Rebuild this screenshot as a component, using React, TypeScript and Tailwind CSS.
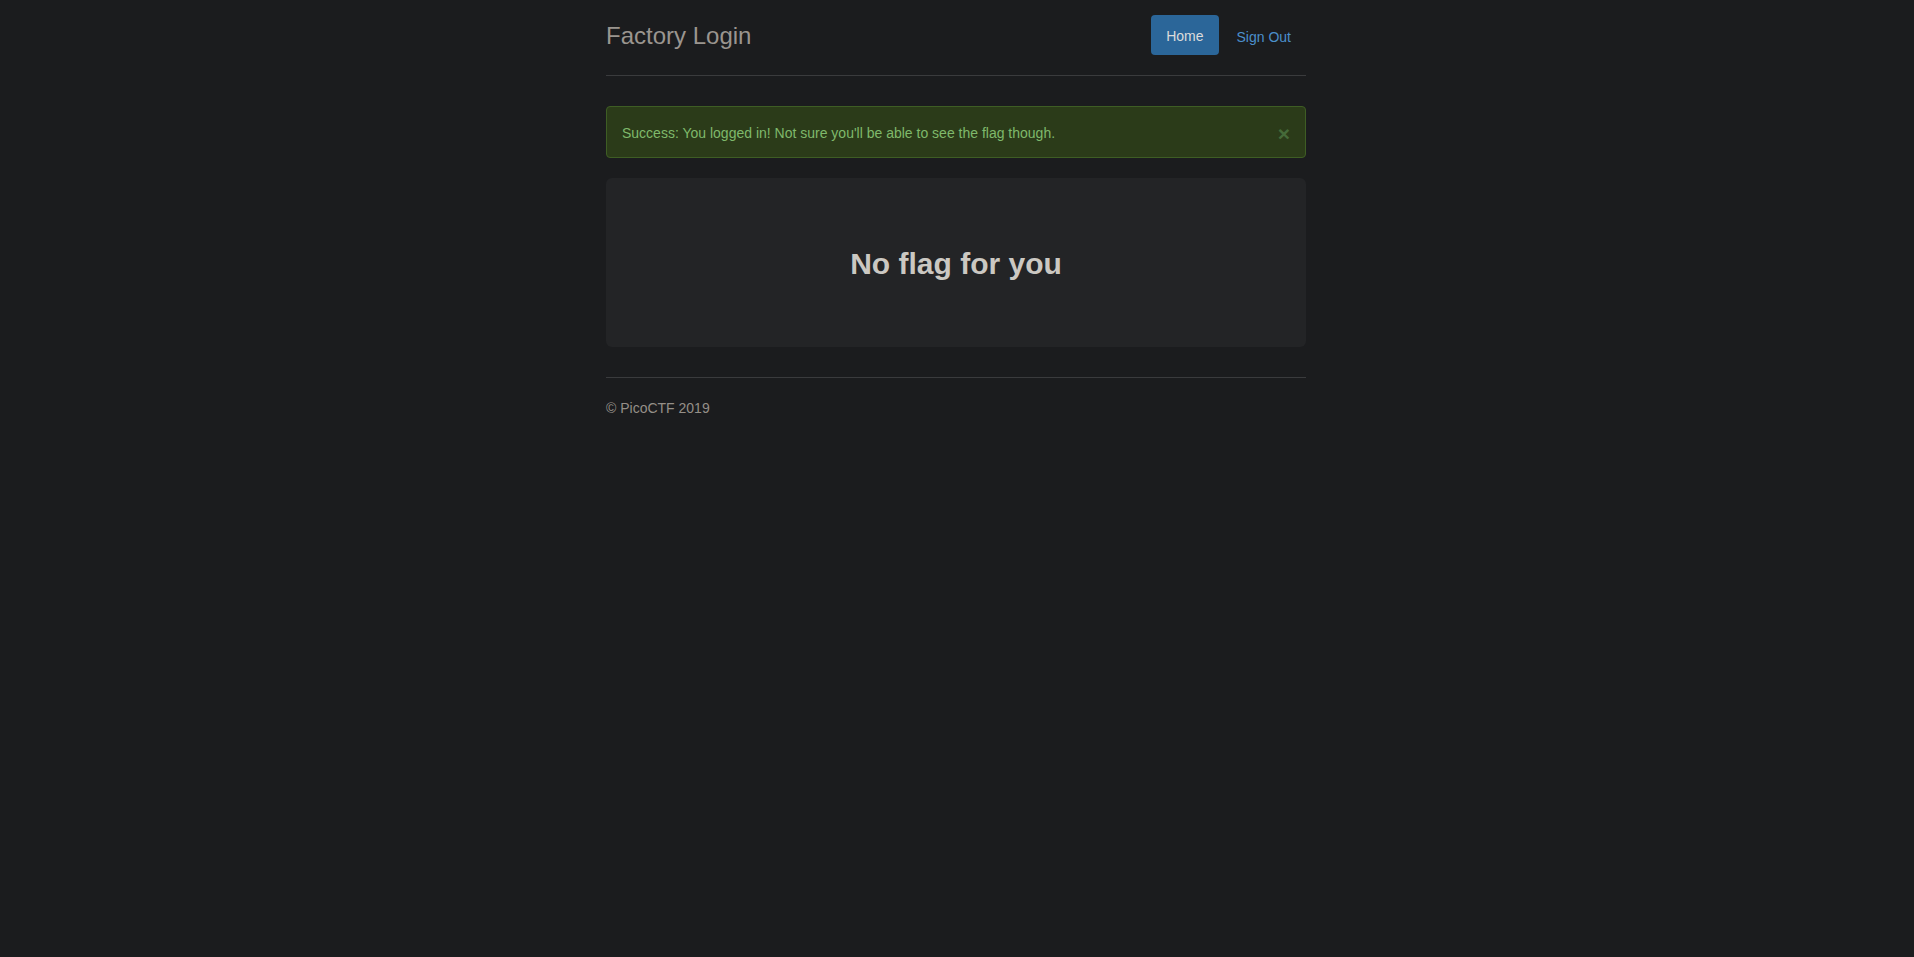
const App: React.FC = () => {
  return (
    <div className="min-h-[957px] w-full bg-[#1b1c1e] font-['Liberation_Sans',Arial,sans-serif] text-[14px] leading-[20px] text-[#c8c8c8]">
      <div className="mx-auto w-[730px] -translate-x-px px-[15px] pt-[15px]">
        <div className="flex items-center justify-between border-b border-[#3a3b3d] pb-[20px]">
          <h3 className="translate-y-px text-[24px] leading-[40px] text-[#9a958f]">Factory Login</h3>
          <ul className="flex items-center gap-[3px]">
            <li>
              <a className="block rounded-[4px] bg-[#2b6699] px-[15px] pt-[11px] pb-[9px] text-[#dcdcdc]">Home</a>
            </li>
            <li>
              <a className="block px-[15px] pt-[12px] pb-[8px] text-[#4b8fcb]">Sign Out</a>
            </li>
          </ul>
        </div>

        <div className="mt-[30px] mb-[20px] flex items-center justify-between rounded-[4px] border border-[#3e5d24] bg-[#2b3b19] pt-[16px] pb-[14px] pr-[15px] pl-[15px] text-[#7fb96b]">
          <span>Success: You logged in! Not sure you'll be able to see the flag though.</span>
          <span className="h-[20px] translate-y-[1px] text-[21px] leading-[20px] font-bold text-[#456a39]">×</span>
        </div>

        <div className="flex h-[169px] items-center justify-center rounded-[6px] bg-[#232426]">
          <h1 className="translate-y-px text-[30px] leading-[36px] font-bold text-[#cbc8c2]">No flag for you</h1>
        </div>

        <div className="mt-[30px] border-t border-[#3a3b3d] pt-[20px]">
          <p className="text-[#958f88]">© PicoCTF 2019</p>
        </div>
      </div>
    </div>
  );
};

export default App;
